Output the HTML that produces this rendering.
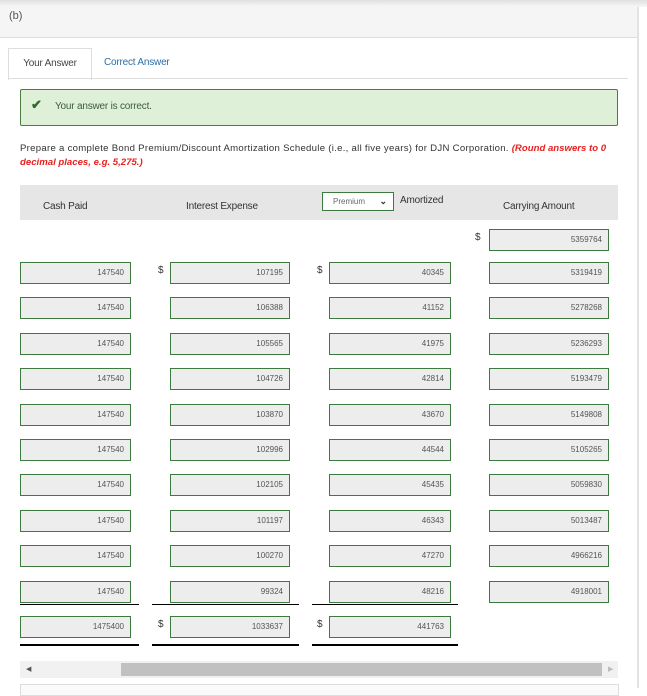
<!DOCTYPE html>
<html><head><style>
body{margin:0;width:647px;height:688px;overflow:hidden;background:#fff;font-family:"Liberation Sans",sans-serif;position:relative;color:#333}
.a{position:absolute}
.in{position:absolute;border:1px solid #3d7a3d;background:#ededed;font-size:8px;color:#555;text-align:right;line-height:20px;padding-right:6px;box-sizing:border-box;height:22px}
.d{position:absolute;font-size:10px;color:#333}
</style></head><body>
<div class="a" style="left:0;top:0;width:647px;height:7px;background:linear-gradient(#e0e0e0,#f7f7f7)"></div>
<div class="a" style="left:0;top:7px;width:637px;height:30px;background:#f5f5f5;border-bottom:1px solid #ddd"></div>
<div class="a" style="left:637px;top:7px;width:2px;height:681px;background:#e3e3e3"></div>
<div class="a" style="left:9px;top:10px;font-size:11px;color:#555">(b)</div>
<div class="a" style="left:8px;top:48px;width:82px;height:31px;border:1px solid #ddd;border-bottom:none;background:#fff;font-size:10px;line-height:30px;text-align:center;color:#444;letter-spacing:-0.2px">Your Answer</div>
<div class="a" style="left:104px;top:57px;font-size:10px;color:#2a6fa8;letter-spacing:-0.2px">Correct Answer</div>
<div class="a" style="left:8px;top:78px;width:620px;height:1px;background:#ddd"></div>
<div class="a" style="left:20px;top:89px;width:596px;height:35px;background:#dff0d8;border:1px solid #4a7d3e;border-radius:2px"></div>
<div class="a" style="left:31px;top:97px;font-size:13px;color:#2f6a2f;font-weight:bold">✔</div>
<div class="a" style="left:55px;top:101px;font-size:10px;color:#3c5a3c;letter-spacing:-0.2px">Your answer is correct.</div>
<div class="a" style="left:20px;top:142px;white-space:nowrap;font-size:9.6px;line-height:14px;color:#333;letter-spacing:0.28px">Prepare a complete Bond Premium/Discount Amortization Schedule (i.e., all five years) for DJN Corporation. <i style="color:#e8201e;font-weight:bold;letter-spacing:0">(Round answers to 0<br>decimal places, e.g. 5,275.)</i></div>
<div class="a" style="left:20px;top:185px;width:598px;height:35px;background:#e6e6e6"></div>
<div class="a" style="left:43px;top:201px;font-size:10px;letter-spacing:-0.2px">Cash Paid</div>
<div class="a" style="left:186px;top:201px;font-size:10px;letter-spacing:-0.2px">Interest Expense</div>
<div class="a" style="left:322px;top:192px;width:72px;height:19px;border:1px solid #3d7a3d;background:#fff;box-sizing:border-box;font-size:8px;color:#666;line-height:17px;padding-left:10px">Premium <span style="position:absolute;right:6px;font-size:9px;color:#333;font-weight:bold">⌄</span></div>
<div class="a" style="left:400px;top:195px;font-size:10px;letter-spacing:-0.2px">Amortized</div>
<div class="a" style="left:503px;top:201px;font-size:10px;letter-spacing:-0.2px">Carrying Amount</div>
<div class="d" style="left:475px;top:232px">$</div>
<div class="in" style="left:489px;top:229px;width:120px">5359764</div>
<div id="rows"></div>
<script>
var data=[["107195","40345","5319419"],["106388","41152","5278268"],["105565","41975","5236293"],["104726","42814","5193479"],["103870","43670","5149808"],["102996","44544","5105265"],["102105","45435","5059830"],["101197","46343","5013487"],["100270","47270","4966216"],["99324","48216","4918001"]];
var h="";
for(var i=0;i<10;i++){var t=Math.round(262+i*35.4);
h+='<div class="in" style="left:20px;top:'+t+'px;width:111px">147540</div>';
h+='<div class="in" style="left:170px;top:'+t+'px;width:120px">'+data[i][0]+'</div>';
h+='<div class="in" style="left:329px;top:'+t+'px;width:122px">'+data[i][1]+'</div>';
h+='<div class="in" style="left:489px;top:'+t+'px;width:120px">'+data[i][2]+'</div>';
if(i==0){h+='<div class="d" style="left:158px;top:'+(t+3)+'px">$</div><div class="d" style="left:317px;top:'+(t+3)+'px">$</div>';}}
document.getElementById("rows").innerHTML=h;
</script>
<div class="a" style="left:20px;top:604px;width:119px;height:1px;background:#000"></div>
<div class="a" style="left:152px;top:604px;width:147px;height:1px;background:#000"></div>
<div class="a" style="left:312px;top:604px;width:146px;height:1px;background:#000"></div>
<div class="in" style="left:20px;top:616px;width:111px">1475400</div>
<div class="d" style="left:158px;top:619px">$</div>
<div class="in" style="left:170px;top:616px;width:120px">1033637</div>
<div class="d" style="left:317px;top:619px">$</div>
<div class="in" style="left:329px;top:616px;width:122px">441763</div>
<div class="a" style="left:20px;top:644px;width:119px;height:2px;background:#000"></div>
<div class="a" style="left:152px;top:644px;width:147px;height:2px;background:#000"></div>
<div class="a" style="left:312px;top:644px;width:146px;height:2px;background:#000"></div>
<div class="a" style="left:20px;top:661px;width:598px;height:17px;background:#f1f1f1"></div>
<div class="a" style="left:121px;top:663px;width:481px;height:13px;background:#c1c1c1"></div>
<div class="a" style="left:26px;top:665px;font-size:7px;color:#555">◀</div>
<div class="a" style="left:608px;top:665px;font-size:7px;color:#bbb">▶</div>
<div class="a" style="left:20px;top:684px;width:597px;height:10px;border:1px solid #ddd;background:#fafafa"></div>
</body></html>
